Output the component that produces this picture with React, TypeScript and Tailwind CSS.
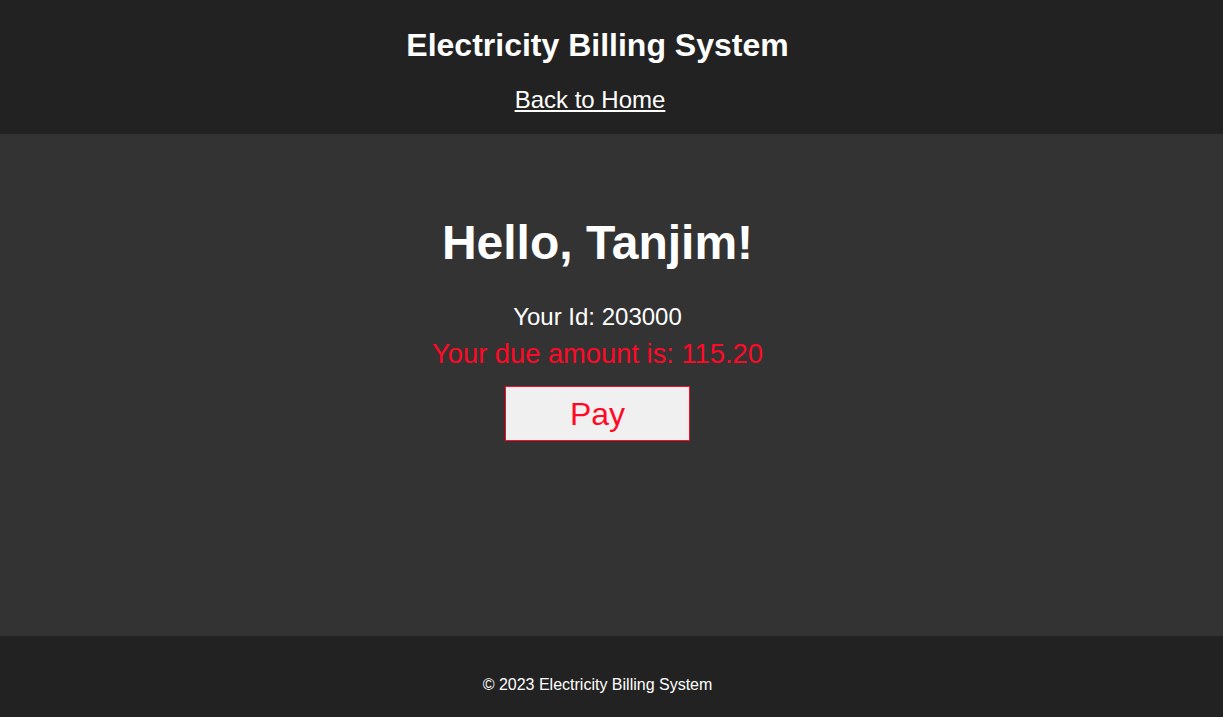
export default function App() {
  return (
    <div className="flex min-h-screen flex-col bg-[#333333] font-['Liberation_Sans',Arial,sans-serif] text-white">
      {/* Header */}
      <header className="flex flex-col items-center bg-[#222222] pb-[20px] pr-[28px] pt-[27px]">
        <h1 className="text-[32px] font-bold leading-[36px]">Electricity Billing System</h1>
        <a href="#" className="mr-[15px] mt-[23px] text-[24px] leading-[28px] text-white underline">
          Back to Home
        </a>
      </header>

      {/* Main */}
      <main className="flex h-[502px] flex-col items-center pr-[28px] pt-[81px]">
        <h2 className="text-[48px] font-bold leading-[56px]">Hello, Tanjim!</h2>
        <p className="mt-[32px] text-[24px] leading-[28px]">Your Id: 203000</p>
        <p className="mt-[7px] text-[27.3px] leading-[32px] text-[#ff0a26]">Your due amount is: 115.20</p>
        <button className="mt-[16px] h-[55px] w-[185px] border border-[#ff0a26] bg-[#f0f0f0] text-[32px] leading-none text-[#ff0a26]">
          Pay
        </button>
      </main>

      {/* Footer */}
      <footer className="flex h-[81px] justify-center bg-[#222222] pr-[28px] pt-[39px]">
        <p className="text-[16px] leading-[20px]">© 2023 Electricity Billing System</p>
      </footer>
    </div>
  );
}
